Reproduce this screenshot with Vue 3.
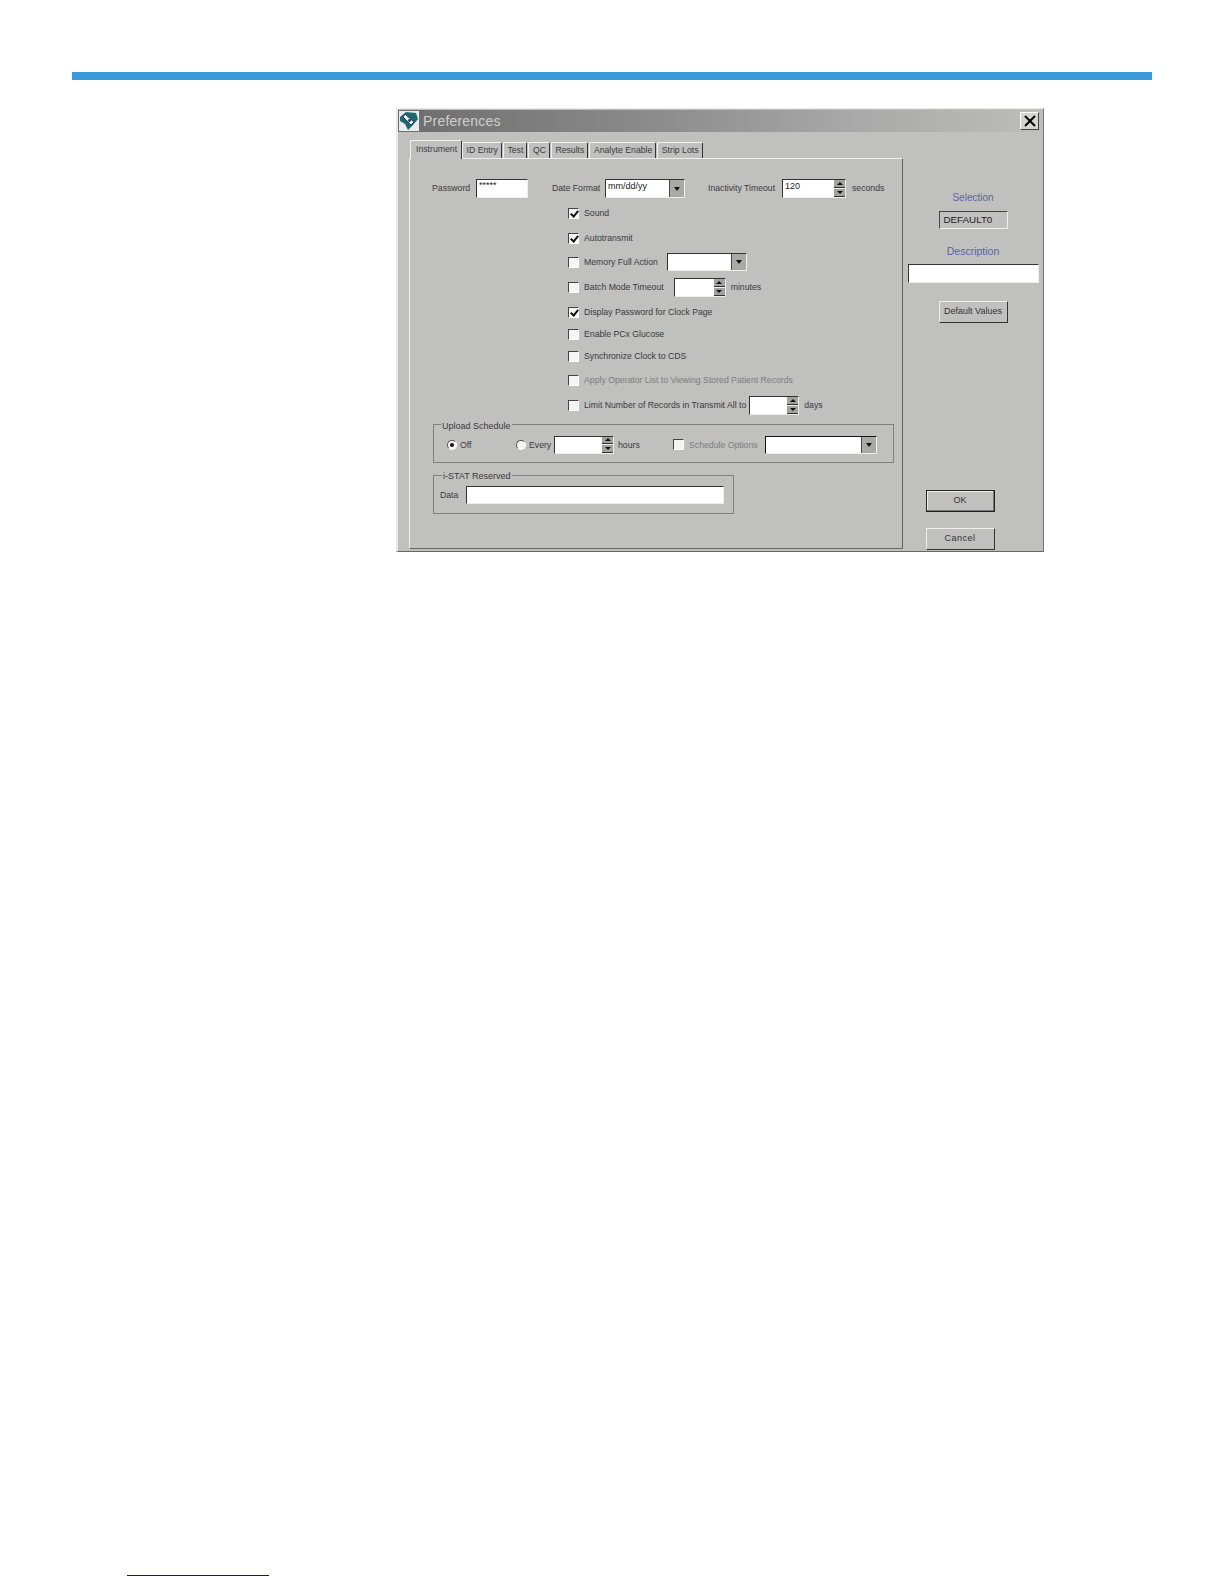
<script setup>
const tabs = ['ID Entry', 'Test', 'QC', 'Results', 'Analyte Enable', 'Strip Lots']
</script>

<template>
  <div class="page">
    <div class="rule"></div>
    <div class="dialog">
      <div class="titlebar">
        <svg class="logo" viewBox="0 0 20 20" width="20" height="20">
          <rect width="20" height="20" fill="#e8ecec" />
          <path d="M1 6 L7 1 L17 2 L19 8 L14 14 L9 19 L6 13 L1 10 Z" fill="#1c6a70" />
          <path d="M6 3 L15 11 L12 14 L4 6 Z" fill="#eef2f2" stroke="#20306a" stroke-width="1" />
          <circle cx="10.5" cy="9.5" r="1.4" fill="#20306a" />
        </svg>
        <span class="title">Preferences</span>
        <span class="close">
          <svg viewBox="0 0 12 12" width="12" height="12"><path d="M1 1 L11 11 M11 1 L1 11" stroke="#000" stroke-width="2" /></svg>
        </span>
      </div>
      <div class="body">
        <div class="left">
          <div class="tabs">
            <span class="tab active">Instrument</span>
            <span v-for="t in tabs" :key="t" class="tab">{{ t }}</span>
          </div>
          <div class="panel">
            <div class="row top">
              <span class="lbl w-pass">Password</span>
              <span class="field pass">*****</span>
              <span class="lbl w-date">Date Format</span>
              <span class="field date">mm/dd/yy<span class="drop"><i></i></span></span>
              <span class="lbl w-inact">Inactivity Timeout</span>
              <span class="field inact">120<span class="spin"><i class="up"></i><i class="down"></i></span></span>
              <span class="lbl sec">seconds</span>
            </div>
            <div class="checks">
              <div class="check s-sound"><span class="box on"></span>Sound</div>
              <div class="check s-auto"><span class="box on"></span>Autotransmit</div>
              <div class="check s-mem"><span class="box"></span>Memory Full Action<span class="field mem"><span class="drop"><i></i></span></span></div>
              <div class="check s-batch"><span class="box"></span>Batch Mode Timeout<span class="field batch"><span class="spin"><i class="up"></i><i class="down"></i></span></span><span class="after">minutes</span></div>
              <div class="check s-disp"><span class="box on"></span>Display Password for Clock Page</div>
              <div class="check s-pcx"><span class="box"></span>Enable PCx Glucose</div>
              <div class="check s-sync"><span class="box"></span>Synchronize Clock to CDS</div>
              <div class="check s-apply off"><span class="box"></span>Apply Operator List to Viewing Stored Patient Records</div>
              <div class="check s-limit"><span class="box"></span>Limit Number of Records in Transmit All to<span class="field limit"><span class="spin"><i class="up"></i><i class="down"></i></span></span><span class="after">days</span></div>
            </div>
            <fieldset class="group upload">
              <legend>Upload Schedule</legend>
              <span class="radio on first"></span><span class="lbl r-off">Off</span>
              <span class="radio"></span><span class="lbl r-every">Every</span>
              <span class="field hours"><span class="spin"><i class="up"></i><i class="down"></i></span></span>
              <span class="lbl r-hours">hours</span>
              <span class="box"></span><span class="lbl r-opts">Schedule Options</span>
              <span class="field opts"><span class="drop"><i></i></span></span>
            </fieldset>
            <fieldset class="group reserved">
              <legend>i-STAT Reserved</legend>
              <span class="lbl r-data">Data</span>
              <span class="field data"></span>
            </fieldset>
          </div>
        </div>
        <div class="side">
          <div class="blue sel">Selection</div>
          <div class="sunk">DEFAULT0</div>
          <div class="blue desc">Description</div>
          <div class="field descbox"></div>
          <div class="btn default">Default Values</div>
          <div class="btn ok">OK</div>
          <div class="btn cancel">Cancel</div>
        </div>
      </div>
    </div>
    <div class="link"></div>
  </div>
</template>

<style scoped>
.page { width: 1224px; height: 1584px; background: #fff; position: relative; overflow: hidden; font-family: "Liberation Sans", Arial, sans-serif; }
.rule { margin: 72px 0 0 72px; width: 1080px; height: 8px; background: #3a9bdc; }
.dialog { margin: 28px 0 0 396px; width: 648px; height: 444px; box-sizing: border-box; background: #c0c0be; border: 1px solid #e9e9e9; border-right-color: #777; border-bottom-color: #666; border-left-width: 2px; padding-top: 1px; overflow: hidden; font-size: 8.7px; color: #3a3a3a; }
.titlebar { height: 22px; display: flex; align-items: center; padding-left: 1px; background: linear-gradient(90deg, #6d6d6d 0%, #8c8c8c 40%, #a8a8a8 70%, #bdbdbb 100%); }
.logo { flex: none; }
.title { margin-left: 4px; font-size: 14px; color: #cfcfcf; letter-spacing: .2px; }
.close { margin: 0 4px 0 auto; width: 19px; height: 18px; box-sizing: border-box; background: #d4d4d2; border: 1px solid; border-color: #fff #444 #444 #fff; display: flex; align-items: center; justify-content: center; }
.body { display: flex; height: 420px; }
.left { width: 505px; flex: none; padding: 8px 0 0 11px; box-sizing: border-box; }
.tabs { display: flex; height: 18px; align-items: flex-end; padding-left: 1px; }
.tab { height: 16px; box-sizing: border-box; padding: 1px 3px 0 3.5px; background: #c0c0be; border: 1px solid #f2f2f2; border-right: 1px solid #333; border-bottom: 0; margin-right: 1px; border-radius: 2px 2px 0 0; white-space: nowrap; line-height: 13px; }
.tab.active { height: 19px; padding: 2px 4px 0 5px; margin-right: 0; position: relative; z-index: 1; margin-bottom: -1px; }
.panel { height: 391px; width: 494px; box-sizing: border-box; border: 1px solid #eee; border-right: 1px solid #666; border-bottom: 1px solid #666; padding: 20px 0 0 0; }
.row.top { display: flex; align-items: center; height: 19px; }
.row.top .lbl { padding-bottom: 2px; }
.lbl { white-space: nowrap; }
.w-pass { margin-left: 22px; width: 44px; }
.field { position: relative; display: inline-block; box-sizing: border-box; background: #fff; border: 1px solid; border-color: #333 #eee #eee #333; font-size: 9px; line-height: 13px; padding-left: 2px; color: #222; vertical-align: middle; }
.pass { width: 52px; height: 19px; line-height: 10px; }
.w-date { margin-left: 24px; width: 53px; }
.date { width: 80px; height: 19px; }
.w-inact { margin-left: 23px; width: 74px; }
.inact { width: 64px; height: 19px; }
.sec { margin-left: 6px; }
.drop { position: absolute; right: 0; top: 0; bottom: 0; width: 14px; background: #a9a9a7; border-left: 1px solid #444; display: flex; align-items: center; justify-content: center; }
.drop i { width: 0; height: 0; border: 3px solid transparent; border-top: 4px solid #111; border-bottom: 0; }
.spin { position: absolute; right: 0; top: 0; bottom: 0; width: 11px; background: #eee; display: flex; flex-direction: column; justify-content: center; gap: 1px; }
.spin i { flex: 1; background: #a2a2a0; border-bottom: 1px solid #333; display: flex; align-items: center; justify-content: center; }
.spin i::before { content: ""; width: 0; height: 0; border: 3px solid transparent; }
.spin .up::before { border-bottom: 3px solid #111; border-top: 0; }
.spin .down::before { border-top: 3px solid #111; border-bottom: 0; }
.checks { margin-top: 8px; padding-left: 158px; }
.check { display: flex; align-items: center; height: 14px; white-space: nowrap; }
.box { flex: none; display: inline-block; width: 11px; height: 11px; box-sizing: border-box; background: #f4f4f4; border: 1px solid; border-color: #444 #fff #fff #444; margin-right: 5px; position: relative; }
.box.on::after { content: ""; position: absolute; left: 3px; top: 0; width: 3px; height: 6px; border: solid #111; border-width: 0 2px 2px 0; transform: rotate(40deg); }
.s-auto { margin-top: 11px; }
.s-mem { margin-top: 10px; }
.s-batch { margin-top: 11px; }
.s-disp { margin-top: 11px; }
.s-pcx { margin-top: 8px; }
.s-sync { margin-top: 8px; }
.s-apply { margin-top: 10px; }
.s-limit { margin-top: 11px; }
.off { color: #7d7d7d; }
.mem { width: 80px; height: 18px; margin-left: 9px; }
.batch { width: 52px; height: 19px; margin-left: 10px; }
.limit { width: 50px; height: 19px; margin-left: 3px; }
.after { margin-left: 5px; }
.group { position: relative; margin: 0; box-sizing: border-box; border: 1px solid #808080; padding: 0; min-width: 0; }
.group legend { padding: 0 1px; line-height: 11px; font-size: 9px; }
.upload { margin: 5px 0 0 23px; width: 461px; height: 46px; display: flex; align-items: center; padding-bottom: 5px; }
.upload legend { margin-left: 7px; padding-top: 4px; }
.radio { flex: none; width: 10px; height: 10px; border-radius: 50%; background: #f5f5f5; border: 1px solid #555; border-right-color: #fff; border-bottom-color: #fff; box-sizing: border-box; position: relative; }
.radio.first { margin-left: 13px; }
.radio.on::after { content: ""; position: absolute; left: 2px; top: 2px; width: 4px; height: 4px; border-radius: 50%; background: #111; }
.r-off { margin-left: 3px; width: 56px; }
.r-every { margin-left: 3px; width: 25px; }
.hours { width: 60px; height: 18px; }
.r-hours { margin-left: 4px; width: 55px; }
.upload .box { margin-right: 5px; }
.r-opts { color: #7d7d7d; width: 76px; }
.opts { width: 112px; height: 18px; border-color: #111 #eee #eee #111; }
.reserved { margin: 6px 0 0 23px; width: 301px; height: 45px; display: flex; align-items: center; padding-bottom: 5px; }
.reserved legend { margin-left: 8px; padding-top: 2px; }
.r-data { margin-left: 6px; width: 20px; margin-right: 6px; }
.data { flex: none; width: 258px; height: 18px; }
.side { flex: 1; text-align: center; display: flex; flex-direction: column; align-items: center; padding: 60px 0 0 0; box-sizing: border-box; }
.blue { color: #5c63a6; font-size: 10px; line-height: 12px; }
.sunk { width: 69px; height: 18px; box-sizing: border-box; margin-top: 7px; border: 1px solid; border-color: #444 #eee #eee #444; font-size: 9.8px; line-height: 15px; text-align: left; padding-left: 4px; color: #222; }
.desc { margin-top: 16px; font-size: 10.5px; }
.descbox { width: 131px; height: 19px; margin-top: 7px; }
.btn { box-sizing: border-box; width: 69px; height: 22px; line-height: 19px; text-align: center; border: 1px solid; border-color: #eee #333 #333 #eee; color: #333; font-size: 9px; flex: none; }
.default { margin-top: 18px; }
.ok { margin: 167px 26px 0 0; border-color: #222; box-shadow: inset -1px -1px 0 #777, inset 1px 1px 0 #eee; }
.cancel { margin: 16px 26px 0 0; letter-spacing: .5px; }
.link { position: absolute; left: 127px; top: 1575px; width: 142px; height: 1px; background: #1010a0; }
</style>
